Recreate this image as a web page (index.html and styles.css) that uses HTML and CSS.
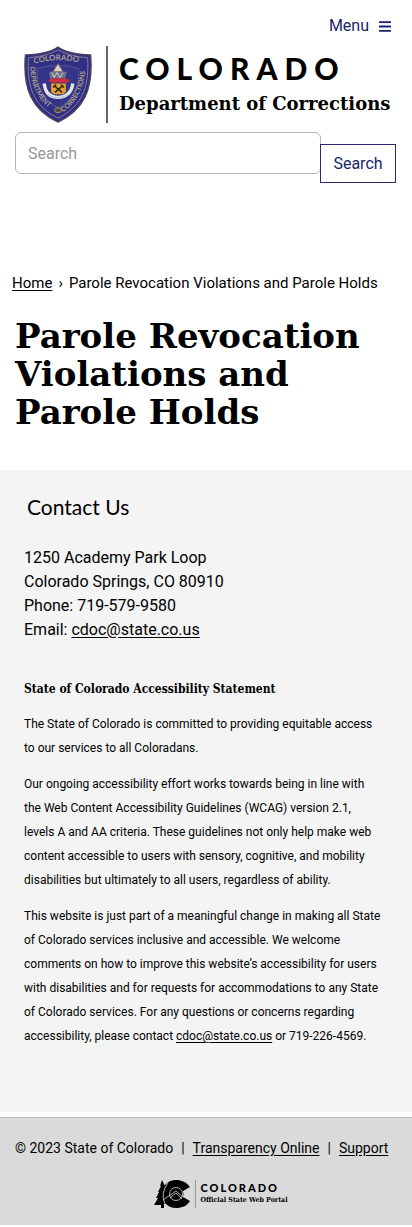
FILE: index.html
```html
<!DOCTYPE html>
<html lang="en">
<head>
<meta charset="utf-8">
<meta name="viewport" content="width=device-width, initial-scale=1">
<title>Parole Revocation Violations and Parole Holds</title>
<link rel="stylesheet" href="styles.css">
</head>
<body>
<header class="site-header">
  <button class="menu-toggle" type="button">Menu
    <svg class="menu-icon" viewBox="0 0 12 11" aria-hidden="true"><path d="M0 1.2h12M0 5.5h12M0 9.8h12" stroke="currentColor" stroke-width="1.8"/></svg>
  </button>
  <div class="brand">
    <svg class="shield" viewBox="0 0 68 78" role="img" aria-label="Colorado Department of Corrections badge">
      <defs>
        <path id="arc-top" d="M10 18Q34 11 60 18"/>
        <path id="arc-left" d="M6 21C6 42 14 56 32 68"/>
        <path id="arc-right" d="M39 67C53 58 61 42 62 20"/>
      </defs>
      <path d="M34 1Q43 8 67 9C70 44 60 65 34 77C8 65-2 44 1 9Q25 8 34 1Z" fill="#312f83" stroke="#4c465d" stroke-width="1.4"/>
      <path d="M34 4Q44 10 64 12C66 43 57 62 34 73C11 62 2 43 4 12Q24 10 34 4Z" fill="none" stroke="#9890a0" stroke-width=".8"/>
      <path d="M34 20Q45 19 55 23C56 42 49 55 34 63C19 55 12 42 13 23Q23 19 34 20Z" fill="#343588" stroke="#77719a" stroke-width=".6"/>
      <g class="shield-text">
        <text font-size="8"><textPath href="#arc-top">COLORADO</textPath></text>
        <text font-size="7"><textPath href="#arc-left">DEPARTMENT</textPath></text>
        <text font-size="7"><textPath href="#arc-right">CORRECTIONS</textPath></text>
      </g>
      <path d="M34 18l5 8H29Z" fill="#d9d3c5" stroke="#8f7368"/>
      <path d="M25 26h18l-2 7H26Z" fill="#6f7288"/>
      <path d="M28 27l2 5 3-5 3 5 3-5" fill="none" stroke="#d6d0c8"/>
      <path d="M24 35l3-2h15l4 2-3 2H27Z" fill="#d32d3d"/>
      <path d="M20 38c1 9 6 14 14 14s14-5 15-14" fill="none" stroke="#e5e6ec" stroke-width="3.4"/>
      <path d="M27 38h15v8q-1 3-8 3-6 0-7-3Z" fill="#e4a12b"/>
      <path d="M30 40l8 7M39 40l-8 7M29 42l3-3M37 39l3 3" stroke="#2b211d" stroke-width="1.6"/>
      <path d="M24 49q10 7 20 0" fill="none" stroke="#6f7b9c" stroke-width=".8" stroke-dasharray="1 1"/>
      <ellipse cx="34" cy="65" rx="3.5" ry="2.5" fill="#4c465d" stroke="#aa944e"/>
    </svg>
    <div class="brand-text">
      <span class="brand-state">COLORADO</span>
      <span class="brand-dept">Department of Corrections</span>
    </div>
  </div>
  <form class="search" role="search">
    <input class="search-input" type="search" placeholder="Search" aria-label="Search">
    <button class="search-button" type="button">Search</button>
  </form>
</header>
<main>
  <nav class="breadcrumb" aria-label="Breadcrumb"><a href="#">Home</a><span>›</span><span>Parole Revocation Violations and Parole Holds</span></nav>
  <h1 class="page-title">Parole Revocation Violations and Parole&nbsp;Holds</h1>
</main>
<section class="contact">
  <h2 class="contact-title">Contact Us</h2>
  <address class="address">1250 Academy Park Loop<br>Colorado Springs, CO 80910<br>Phone: 719-579-9580<br>Email: <a href="#">cdoc@state.co.us</a></address>
  <div class="statement">
    <h3 class="statement-title">State of Colorado Accessibility Statement</h3>
    <p>The State of Colorado is committed to providing equitable access<br>to our services to all Coloradans.</p>
    <p>Our ongoing accessibility effort works towards being in line with<br>the Web Content Accessibility Guidelines (WCAG) version 2.1,<br>levels A and AA criteria. These guidelines not only help make web<br>content accessible to users with sensory, cognitive, and mobility<br>disabilities but ultimately to all users, regardless of ability.</p>
    <p>This website is just part of a meaningful change in making all State<br>of Colorado services inclusive and accessible. We welcome<br>comments on how to improve this website’s accessibility for users<br>with disabilities and for requests for accommodations to any State<br>of Colorado services. For any questions or concerns regarding<br>accessibility, please contact <a href="#">cdoc@state.co.us</a> or 719-226-4569.</p>
  </div>
</section>
<footer class="site-footer">
  <div class="legal"><span>© 2023 State of Colorado</span><span>|</span><a href="#">Transparency Online</a><span>|</span><a href="#">Support</a></div>
  <div class="portal">
    <svg class="portal-mark" viewBox="0 0 36 28" aria-hidden="true">
      <path d="M8 0l3 6-1 1 3 5-2 1 3 5-2 1 3 5h-5v4H7v-3H0l4-7-2 0 3-6H4l3-6H6Z"/>
      <path d="M36 7C32 2 28 0 22 0 14 0 8 6 8 14s6 14 14 14c6 0 11-2 14-7l-7-4h-2a6 6 0 1 1 0-6h2Z"/>
      <circle cx="22" cy="14" r="7.5"/>
      <g fill="none" stroke="#dadada" stroke-width=".8"><circle cx="22" cy="14" r="6.5"/><path d="M14 3Q6 13 11 24M9 20l13-9 7 6M16 18l6-5 6 6"/></g>
    </svg>
    <div class="portal-text"><span class="portal-state">COLORADO</span><span class="portal-name">Official State Web Portal</span></div>
  </div>
</footer>
</body>
</html>
```
FILE: styles.css
```css
* { box-sizing: border-box; }
body { margin: 0; background: #fff; color: #000; font: 16px/24px Roboto, sans-serif; }
a { color: inherit; text-underline-offset: 2px; }
button, input { font: inherit; margin: 0; }

.site-header { display: flex; flex-direction: column; padding: 14px 16px 0 15px; }
.menu-toggle { align-self: flex-end; display: flex; align-items: center; gap: 10px; margin-right: 5px; padding: 0; border: 0; background: none; color: #17256b; }
.menu-icon { width: 12px; height: 11px; }
.brand { display: flex; margin: 8px 0 9px 9px; }
.shield { width: 68px; height: 77px; flex: none; }
.shield-text { fill: #aaa08e; font-family: Lato, sans-serif; font-weight: 700; }
.brand-text { display: flex; flex-direction: column; margin-left: 14px; padding: 7px 0 0 11px; border-left: 2px solid #666; white-space: nowrap; }
.brand-state { font: 900 30px/30px Lato, sans-serif; letter-spacing: 7px; }
.brand-dept { margin-top: 8px; font: bold 18px/26px "DejaVu Serif", serif; }
.search { display: flex; align-items: flex-start; }
.search-input { flex: 1; min-width: 0; height: 42px; padding: 0 12px; border: 1px solid #b5b5b5; border-radius: 6px; background: #fff; appearance: none; }
.search-input::placeholder { color: #999; opacity: 1; }
.search-button { width: 76px; height: 39px; margin: 12px 0 0 -1px; padding: 0; border: 1px solid #2c2a75; background: #fff; color: #17256b; }

.breadcrumb { display: flex; gap: 6px; margin-top: 88px; padding: 0 12px; font-size: 15px; line-height: 24px; white-space: nowrap; }
.page-title { margin: 22px 15px 39px; font: bold 34px/38px "DejaVu Serif", serif; }

.contact { padding: 25px 24px 52px; background: #f4f4f4; border-bottom: 5px double #fff; }
.contact-title { margin: 0 0 27px 3px; font: 400 21px/24px Lato, sans-serif; }
.address { font-style: normal; }
.statement { margin-top: 35px; font-size: 12px; line-height: 24px; white-space: nowrap; }
.statement-title { margin: 0 0 11px; font: bold 12px/24px "DejaVu Serif Condensed", "DejaVu Serif", serif; }
.statement p { margin: 0 0 12px; }

.site-footer { padding: 18px 15px 17px; background: #dadada; border-top: 1px solid #bbb; }
.legal { display: flex; gap: 8px; font-size: 14px; white-space: nowrap; }
.portal { display: flex; justify-content: center; margin-top: 20px; padding-left: 30px; }
.portal-mark { width: 36px; height: 28px; }
.portal-text { display: flex; flex-direction: column; margin-left: 5px; padding: 2px 0 0 4px; border-left: 1px solid #999; white-space: nowrap; }
.portal-state { font: 900 11px/12px Lato, sans-serif; letter-spacing: 2px; }
.portal-name { font: bold 7px/12px "DejaVu Serif Condensed", "DejaVu Serif", serif; }
```
